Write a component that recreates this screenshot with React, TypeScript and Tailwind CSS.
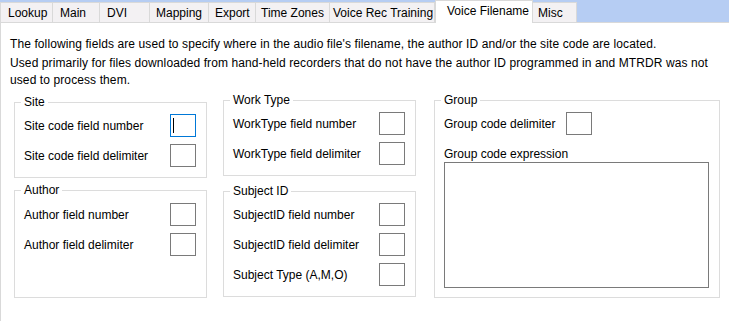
// Voice Filename settings tab — classic WinForms property page.
const tabs = [
  { label: "Lookup", w: "w-[53px]", pl: "pl-[7px]" },
  { label: "Main", w: "w-[47px]", pl: "pl-[7px]" },
  { label: "DVI", w: "w-[50px]", pl: "pl-[7px]" },
  { label: "Mapping", w: "w-[59px]", pl: "pl-[6px]" },
  { label: "Export", w: "w-[47px]", pl: "pl-[6px]" },
  { label: "Time Zones", w: "w-[74px]", pl: "pl-[5px]" },
  { label: "Voice Rec Training", w: "w-[105px]", pl: "pl-[3px]" },
  { label: "Voice Filename", w: "w-[98px]", pl: "pl-[11px]", active: true },
  { label: "Misc", w: "w-[44px]", pl: "pl-[5px]" },
];

function Box({ focused = false }: { focused?: boolean }) {
  return (
    <div
      className={`flex h-[23px] w-[26px] shrink-0 items-center border bg-white pl-[2px] ${
        focused ? "border-[#0078d7]" : "border-[#7a7a7a]"
      }`}
    >
      {focused && <span className="h-[15px] w-px bg-black" />}
    </div>
  );
}

function Row({ label, focused }: { label: string; focused?: boolean }) {
  return (
    <div className="flex h-[23px] items-center justify-between">
      <span>{label}</span>
      <Box focused={focused} />
    </div>
  );
}

function Group({
  title,
  className,
  children,
}: {
  title: string;
  className: string;
  children: React.ReactNode;
}) {
  return (
    <fieldset className={`border border-[#dcdcdc] pl-[6px] pr-[10px] ${className}`}>
      <legend className="px-[3px] leading-[16px]">{title}</legend>
      <div className="pl-[3px]">{children}</div>
    </fieldset>
  );
}

export default function App() {
  return (
    <div className="h-[321px] w-[729px] overflow-hidden bg-white font-['Liberation_Sans',Arial,sans-serif] text-[12px] leading-[16px] text-black">
      <div className="flex h-[23px] items-end bg-[#b6cdf3]">
        {tabs.map((t, i) =>
          t.active ? (
            <div
              key={t.label}
              className={`${t.w} ${t.pl} h-[23px] shrink-0 whitespace-nowrap border-x border-t border-[#d9d9d9] bg-white pt-[2px]`}
            >
              {t.label}
            </div>
          ) : (
            <div
              key={t.label}
              className={`${t.w} ${t.pl} h-[21px] shrink-0 whitespace-nowrap border-b border-r border-t border-[#d9d9d9] bg-[#f3f1f3] pt-[2px] ${
                i === 0 ? "border-l" : ""
              }`}
            >
              {t.label}
            </div>
          ),
        )}
        <div className="h-full flex-1 border-b border-[#d9d9d9]" />
      </div>

      <div className="h-[298px] border-l border-[#d9d9d9] pl-[9px] pt-[13px]">
        <p className="whitespace-nowrap tracking-[0.1px]">
          The following fields are used to specify where in the audio file's filename, the author ID and/or the site
          code are located.
        </p>
        <p className="mt-[3px] w-[700px] leading-[17px] tracking-[0.1px]">
          Used primarily for files downloaded from hand-held recorders that do not have the author ID programmed in and
          MTRDR was not used to process them.
        </p>

        <div className="ml-[4px] mt-[3px] flex">
          <div className="flex w-[193px] flex-col">
            <Group title="Site" className="mt-[2px] h-[84px]">
              <div className="flex flex-col gap-[7px] pt-[4px]">
                <Row label="Site code field number" focused />
                <Row label="Site code field delimiter" />
              </div>
            </Group>
            <Group title="Author" className="mt-[4px] h-[116px]">
              <div className="flex flex-col gap-[7px] pt-[5px]">
                <Row label="Author field number" />
                <Row label="Author field delimiter" />
              </div>
            </Group>
          </div>

          <div className="ml-[16px] flex w-[193px] flex-col">
            <Group title="Work Type" className="h-[84px]">
              <div className="flex flex-col gap-[7px] pt-[4px]">
                <Row label="WorkType field number" />
                <Row label="WorkType field delimiter" />
              </div>
            </Group>
            <Group title="Subject ID" className="mt-[7px] h-[114px]">
              <div className="flex flex-col gap-[7px] pt-[4px]">
                <Row label="SubjectID field number" />
                <Row label="SubjectID field delimiter" />
                <Row label="Subject Type (A,M,O)" />
              </div>
            </Group>
          </div>

          <div className="ml-[18px] w-[286px]">
            <Group title="Group" className="h-[206px]">
              <div className="pt-[4px]">
                <div className="flex h-[23px] items-center">
                  <span className="w-[122px]">Group code delimiter</span>
                  <Box />
                </div>
                <div className="mt-[11px]">Group code expression</div>
                <div className="h-[126px] w-[265px] border border-[#7a7a7a] bg-white" />
              </div>
            </Group>
          </div>
        </div>
      </div>
    </div>
  );
}
